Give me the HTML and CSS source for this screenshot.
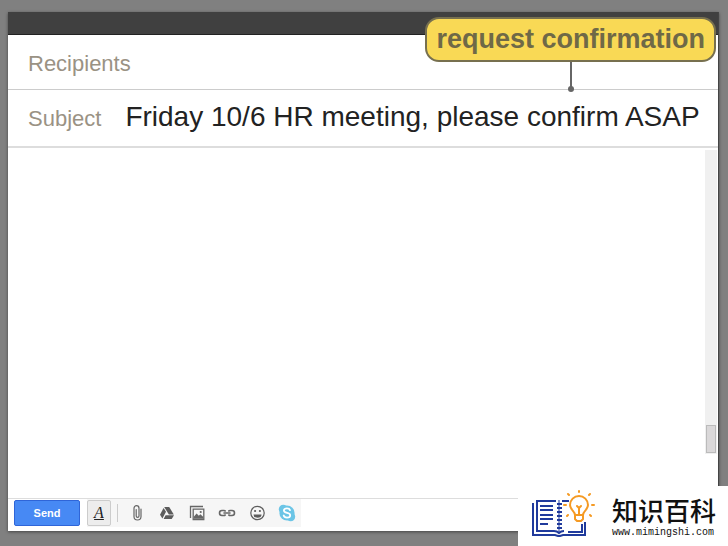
FILE: index.html
```html
<!DOCTYPE html>
<html lang="en">
<head>
    <meta charset="UTF-8">
    <meta name="viewport" content="width=device-width, initial-scale=1.0">
    <title>New Message</title>
    <link rel="stylesheet" href="styles.css">
</head>
<body>
    <form class="compose">
        <div class="compose-header"></div>

        <div class="field recipients">
            <label for="recipients">Recipients</label>
            <input type="text" id="recipients">
        </div>
        <div class="field subject">
            <label for="subject">Subject</label>
            <input type="text" id="subject" value="Friday 10/6 HR meeting, please confirm ASAP">
        </div>

        <div class="message">
            <textarea class="message-text" aria-label="Message body"></textarea>
            <div class="scroll-track">
                <div class="scroll-thumb"></div>
            </div>
        </div>

        <div class="toolbar">
            <button type="button" class="send-btn">Send</button>
            <div class="tools">
                <button type="button" class="tool format" aria-label="Formatting options">A</button>
                <span class="divider"></span>
                <button type="button" class="tool" aria-label="Attach files">
                    <svg width="18" height="18" viewBox="0 0 18 18" fill="none" stroke="#666" stroke-width="1.2" stroke-linecap="round">
                        <path d="M13 5v7.5a3.5 3.5 0 0 1-7 0V4.2a2.5 2.5 0 0 1 5 0v7.8a1.4 1.4 0 0 1-2.8 0V5.5"/>
                    </svg>
                </button>
                <button type="button" class="tool" aria-label="Insert from Drive">
                    <svg width="18" height="18" viewBox="0 0 18 18" fill="#5c5c5c">
                        <path d="M6.2 3h5l4.6 7.4h-4.9z"/>
                        <path d="M5.6 3.9 8 7.8 4.4 14.6 2 10.7z"/>
                        <path d="M7.6 11.3h8.4L13.7 15H5.6z"/>
                    </svg>
                </button>
                <button type="button" class="tool" aria-label="Insert photo">
                    <svg width="18" height="18" viewBox="0 0 18 18" fill="none" stroke="#666" stroke-width="1.3">
                        <path d="M2.5 14V2.5H15"/>
                        <path d="M5.2 5.2h10.6v10.3H5.2z"/>
                        <path d="M6 14.8v-2.3l2.6-3 2.2 2.2 1.6-1.5 2.7 2.6v2z" fill="#666" stroke="none"/>
                        <circle cx="12.7" cy="8" r="1.1" fill="#666" stroke="none"/>
                    </svg>
                </button>
                <button type="button" class="tool" aria-label="Insert link">
                    <svg width="18" height="18" viewBox="0 0 18 18" fill="none" stroke="#666" stroke-width="1.6" stroke-linecap="round">
                        <path d="M7.2 11A3 3 0 0 1 6 11.5H4a2.5 2.5 0 0 1 0-5h2a3 3 0 0 1 1.2.5M10.8 7a3 3 0 0 1 1.2-.5h2a2.5 2.5 0 0 1 0 5h-2a3 3 0 0 1-1.2-.5M6 9h6"/>
                    </svg>
                </button>
                <button type="button" class="tool" aria-label="Insert emoji">
                    <svg width="18" height="18" viewBox="0 0 18 18" fill="none" stroke="#5c5c5c" stroke-width="1.2">
                        <circle cx="9.5" cy="9" r="6.7"/>
                        <circle cx="7.1" cy="7" r="1.1" fill="#5c5c5c" stroke="none"/>
                        <circle cx="11.9" cy="7" r="1.1" fill="#5c5c5c" stroke="none"/>
                        <path d="M5.5 10.5h8a4 3.2 0 0 1-8 0z" fill="#5c5c5c" stroke="none"/>
                    </svg>
                </button>
                <button type="button" class="tool" aria-label="Skype">
                    <svg width="18" height="18" viewBox="0 0 18 18">
                        <g fill="#6cc5e6">
                            <circle cx="9" cy="9" r="7.6"/>
                            <circle cx="5.3" cy="5.3" r="4.5"/>
                            <circle cx="12.7" cy="12.7" r="4.5"/>
                        </g>
                        <path d="M12 6.2C11.6 4.9 10.4 4.4 9 4.4c-1.8 0-3.1.8-3.1 2.2 0 3.2 6.3 1.5 6.3 4.6 0 1.5-1.4 2.4-3.2 2.4-1.7 0-2.9-.7-3.3-2.1" fill="none" stroke="#fff" stroke-width="1.8" stroke-linecap="round"/>
                    </svg>
                </button>
            </div>
        </div>
    </form>

    <div class="callout">
        <div class="callout-label">request confirmation</div>
        <div class="callout-pin"></div>
    </div>

    <div class="watermark">
        <svg class="watermark-logo" width="66" height="52" viewBox="0 0 66 52" fill="none">
            <g stroke="#203a9c" stroke-width="2">
                <path d="M3 13v32h22l3 1h2l3-1h22V32"/>
                <path d="M26 11H7v30h17q3 0 5 2 2-2 5-2M38 42h14v-8M32 11h7"/>
                <path d="M29 10v32" stroke-width="1"/>
                <path d="M10 16h13M10 20h13M10 25h13M10 29h13M10 34h8"/>
                <path d="M27 14h5M27 18h5M27 22h5M27 26h5M27 30h5M27 34h5M27 38h5"/>
            </g>
            <g stroke="#f59a23" stroke-width="2" stroke-linecap="round">
                <path d="M45 25c0-4-5-5-5-10a9 9 0 0 1 18 0c0 5-5 6-5 10z"/>
                <path d="M45 25v4l2 2h4l2-2v-4M49 24v-6M47 16l2 2 2-2"/>
                <path d="M49 2V1M39 5l-1-1M59 5l1-1M36 15h-2M62 15h2M38 25l-1 1M60 25l1 1"/>
            </g>
        </svg>
        <div class="watermark-text">
            <div class="watermark-name" lang="zh-CN">知识百科</div>
            <div class="watermark-url">www.mimingshi.com</div>
        </div>
    </div>
</body>
</html>
```
FILE: styles.css
```css
* {
    margin: 0;
    padding: 0;
    box-sizing: border-box;
}

body {
    font-family: "Liberation Sans", Arial, sans-serif;
    background: #808080;
    height: 100vh;
    padding: 12px 9px 15px 8px;
    overflow: hidden;
}

button,
input,
textarea {
    font-family: inherit;
    border: none;
    background: none;
    outline: none;
}

.compose {
    height: 100%;
    display: flex;
    flex-direction: column;
    background: #fff;
    border-right: 1px solid #444;
    box-shadow: 0 1px 3px #444;
}

.compose-header {
    height: 23px;
    background: #404040;
    border-bottom: 1px solid #222;
}

/* Recipients and subject rows */
.field {
    display: flex;
    align-items: center;
    gap: 24px;
    padding-left: 20px;
    border-bottom: 1px solid #ccc;
}

.recipients {
    height: 55px;
    padding-top: 4px;
}

.subject {
    height: 58px;
    align-items: baseline;
    padding-top: 11px;
    border-bottom: 2px solid #ddd;
}

.field label {
    font-size: 22px;
    color: #9a9284;
}

.field input {
    flex: 1;
    min-width: 0;
    font-size: 28px;
    color: #222;
}

.message {
    flex: 1;
    display: flex;
    padding: 2px 1px 44px 0;
}

.message-text {
    flex: 1;
    resize: none;
    padding: 8px 20px;
    font-size: 22px;
}

.scroll-track {
    width: 12px;
    display: flex;
    flex-direction: column;
    justify-content: flex-end;
    padding: 1px;
    background: #f0f0f0;
}

.scroll-thumb {
    height: 28px;
    background: #dad8d9;
    border: 1px solid #bbb;
}

/* Bottom toolbar */
.toolbar {
    display: flex;
    align-items: center;
    gap: 7px;
    padding: 0 6px 4px;
    border-top: 1px solid #ddd;
}

.send-btn {
    width: 66px;
    height: 26px;
    background: #4789f4;
    border: 1px solid #2f65d8;
    border-radius: 2px;
    color: #fff;
    font-size: 11px;
    font-weight: bold;
}

.tools {
    display: flex;
    align-items: center;
    gap: 6px;
    padding-right: 2px;
    background: #f6f6f6;
}

.tool {
    width: 24px;
    height: 28px;
    display: flex;
    align-items: center;
    justify-content: center;
}

.format {
    height: 26px;
    background: #ededed;
    border: 1px solid #ccc;
    border-radius: 2px;
    color: #222;
    font-family: "Liberation Serif", serif;
    font-size: 16px;
    font-style: italic;
    text-decoration: underline;
}

.divider {
    width: 1px;
    height: 18px;
    margin-right: 1px;
    background: #ccc;
}

/* Callout over the top right corner */
.callout {
    position: absolute;
    top: 17px;
    right: 12px;
    display: flex;
    flex-direction: column;
    align-items: center;
}

.callout-label {
    padding: 0 9px;
    line-height: 41px;
    background: #f9d955;
    border: 2px solid #77704f;
    border-radius: 14px;
    color: #6f6947;
    font-size: 27px;
    font-weight: bold;
}

.callout-pin {
    width: 2px;
    height: 28px;
    background: #666;
}

.callout-pin::after {
    content: "";
    position: absolute;
    bottom: -2px;
    width: 6px;
    height: 6px;
    margin-left: -2px;
    border-radius: 50%;
    background: #666;
}

.watermark {
    position: absolute;
    right: 0;
    bottom: 0;
    width: 210px;
    height: 60px;
    display: flex;
    align-items: center;
    gap: 16px;
    padding-left: 12px;
    background: #fff;
}

.watermark-name {
    font-family: "Noto Sans CJK SC", sans-serif;
    font-size: 26px;
    font-weight: 500;
    line-height: 34px;
    color: #111;
}

.watermark-url {
    font-family: "Liberation Mono", monospace;
    font-size: 10px;
    line-height: 12px;
    color: #111;
}
```
